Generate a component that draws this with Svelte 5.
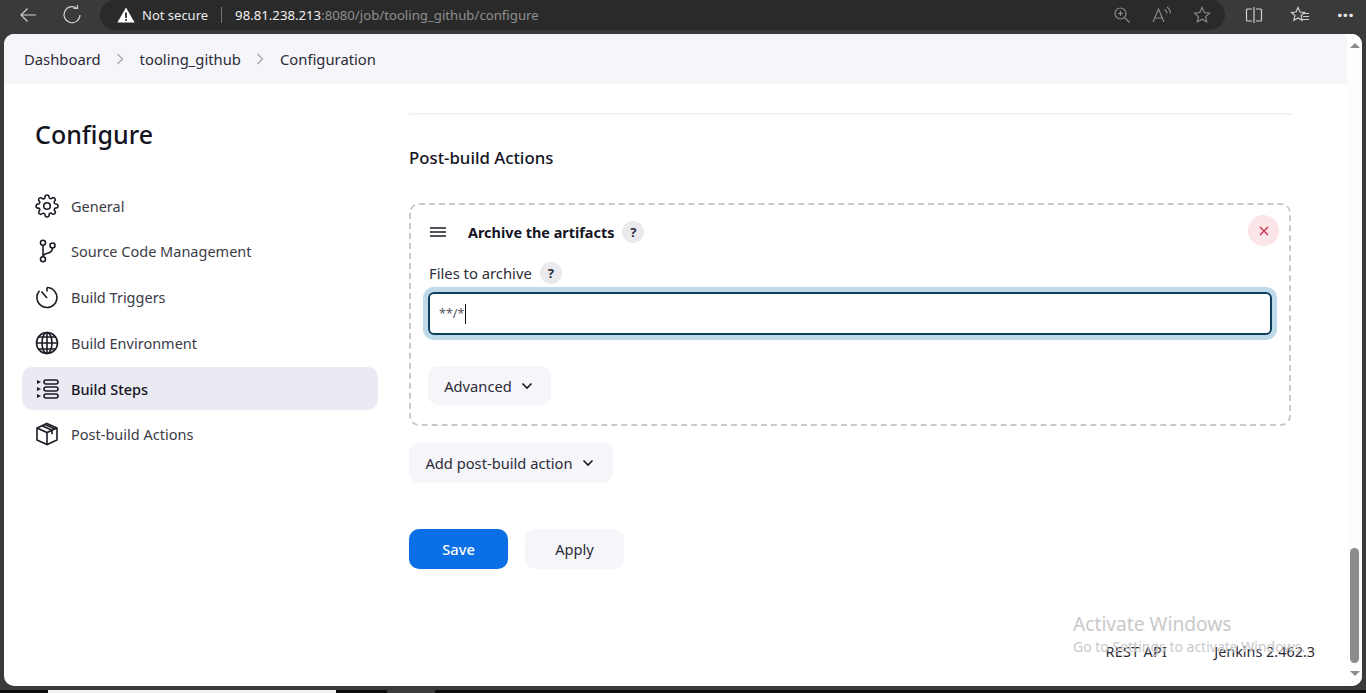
<script>
  const crumbs = ['Dashboard', 'tooling_github', 'Configuration'];
  const sections = [
    { id: 'general', label: 'General' },
    { id: 'scm', label: 'Source Code Management' },
    { id: 'triggers', label: 'Build Triggers' },
    { id: 'env', label: 'Build Environment' },
    { id: 'steps', label: 'Build Steps', active: true },
    { id: 'post', label: 'Post-build Actions' }
  ];
</script>

{#snippet chevron()}
  <svg class="chev" viewBox="0 0 12 8" width="12" height="8"><path d="M1.5 1.5 6 6l4.5-4.5" /></svg>
{/snippet}

<div class="window">
  <header class="chrome">
    <button class="nav-btn" aria-label="Back">
      <svg viewBox="0 0 20 20" width="20" height="20"><path d="M18 10H3M9.5 3.5 3 10l6.500 6.500" /></svg>
    </button>
    <button class="nav-btn reload" aria-label="Reload">
      <svg viewBox="0 0 20 20" width="20" height="20"><path d="M15 3.500 A8 8 0 1 0 18 10" /><path d="M11.500 3.500H15.500V0" /></svg>
    </button>
    <div class="address">
      <svg class="warn" viewBox="0 0 18 16" width="18" height="16"><path d="M9 .5 17.600 15.500H.4z" fill="#fff" /><rect x="8.100" y="5.500" width="1.800" height="5.500" fill="#2b2b2b" /><rect x="8.100" y="12" width="1.800" height="1.800" fill="#2b2b2b" /></svg>
      <span class="insecure">Not secure</span>
      <span class="sep"></span>
      <span class="url"><b>98.81.238.213</b>:8080/job/tooling_github/configure</span>
      <span class="addr-icons">
        <svg viewBox="0 0 18 18" width="18" height="18"><circle cx="7.500" cy="7.500" r="5.500" /><path d="M11.500 11.500 16.500 16.500M5 7.500h5M7.500 5v5" /></svg>
        <svg viewBox="0 0 20 18" width="20" height="18"><path d="M1 16 6.500 3 12 16M3 12h7M12.500 3.500a5 5 0 0 1 2.500 4M15 1a8 8 0 0 1 3.500 6.500" /></svg>
        <svg viewBox="0 0 18 18" width="18" height="18"><path d="M9 1.500 11.300 6.500l5.200.6-3.900 3.500 1.100 5.300L9 13.200l-4.700 2.700 1.100-5.300L1.500 7.100l5.200-.6z" /></svg>
      </span>
    </div>
    <div class="tools">
      <svg viewBox="0 0 18 18" width="18" height="18"><path d="M7 3H2.500a1 1 0 0 0-1 1v10a1 1 0 0 0 1 1H7M11 3h4.500a1 1 0 0 1 1 1v10a1 1 0 0 1-1 1H11M9 1v16" /></svg>
      <svg viewBox="0 0 20 18" width="20" height="18"><path d="M8 1.500 10 6l4.500.5-3.400 3 1 4.800L8 12l-4.100 2.300 1-4.800-3.400-3L6 6z" /><path d="M14 7.500h5M13 10.500h6M12.500 13.500h6.500" /></svg>
      <span class="dots">···</span>
    </div>
  </header>

  <div class="page">
    <div class="page-main">
      <nav class="breadcrumbs">
        {#each crumbs as crumb, i}
          {#if i > 0}
            <svg class="crumb-sep" viewBox="0 0 8 12" width="8" height="12"><path d="M1.500 1 6.500 6l-5 5" /></svg>
          {/if}
          <span>{crumb}</span>
        {/each}
      </nav>

      <div class="body">
        <aside class="sidebar">
          <h1>Configure</h1>
          <ul>
            {#each sections as s}
              <li class:active={s.active}>
                <svg class="side-icon" viewBox="0 0 24 24" width="24" height="24">
                  {#if s.id === 'general'}
                    <circle cx="12" cy="12" r="3.300" />
                    <path d="M19.400 15a1.650 1.650 0 0 0 .33 1.820l.06.06a2 2 0 0 1 0 2.830 2 2 0 0 1-2.830 0l-.06-.06a1.650 1.650 0 0 0-1.820-.33 1.650 1.650 0 0 0-1 1.510V21a2 2 0 0 1-2 2 2 2 0 0 1-2-2v-.09A1.650 1.650 0 0 0 9 19.400a1.650 1.650 0 0 0-1.820.33l-.06.06a2 2 0 0 1-2.830 0 2 2 0 0 1 0-2.830l.06-.06a1.650 1.650 0 0 0 .33-1.820 1.650 1.650 0 0 0-1.510-1H3a2 2 0 0 1-2-2 2 2 0 0 1 2-2h.09A1.650 1.650 0 0 0 4.600 9a1.650 1.650 0 0 0-.33-1.820l-.06-.06a2 2 0 0 1 0-2.830 2 2 0 0 1 2.830 0l.06.06a1.650 1.650 0 0 0 1.820.33H9a1.650 1.650 0 0 0 1-1.510V3a2 2 0 0 1 2-2 2 2 0 0 1 2 2v.09a1.650 1.650 0 0 0 1 1.510 1.650 1.650 0 0 0 1.820-.33l.06-.06a2 2 0 0 1 2.830 0 2 2 0 0 1 0 2.830l-.06.06a1.650 1.650 0 0 0-.33 1.820V9a1.650 1.650 0 0 0 1.510 1H21a2 2 0 0 1 2 2 2 2 0 0 1-2 2h-.09a1.650 1.650 0 0 0-1.510 1z" />
                  {:else if s.id === 'scm'}
                    <circle cx="8" cy="3.800" r="2.500" />
                    <circle cx="8" cy="20.200" r="2.500" />
                    <circle cx="17.500" cy="6.500" r="2.500" />
                    <path d="M8 6.300v11.400M17.500 9c0 3.500-2 4.500-5 5.300-2.500.7-4.500 1-4.500 3.400" />
                  {:else if s.id === 'triggers'}
                    <path d="M12 2.500a10 10 0 1 1-7.500 3.300" />
                    <path d="M12 2.500v4M12 13 6.500 6.500" />
                  {:else if s.id === 'env'}
                    <circle cx="12" cy="12" r="10.500" />
                    <ellipse cx="12" cy="12" rx="5" ry="10.500" />
                    <path d="M12 1.500v21M1.500 12h21M3.500 6h17M3.500 18h17" />
                  {:else if s.id === 'steps'}
                    <rect x="9" y="3" width="14" height="4" rx="2" />
                    <rect x="9" y="10" width="14" height="4" rx="2" />
                    <rect x="9" y="17" width="14" height="4" rx="2" />
                    <path class="solid" d="M2 3l4 2-4 2zM2 10l4 2-4 2zM2 17l4 2-4 2z" />
                  {:else}
                    <path d="M12 1.500 22 6v12l-10 4.500L2 18V6z" />
                    <path d="M2 6l10 4.500L22 6M12 10.500v12M7 3.800l10 4.500v4M10 2.500l10 4.500" />
                  {/if}
                </svg>
                <span>{s.label}</span>
              </li>
            {/each}
          </ul>
        </aside>

        <main class="content">
          <hr />
          <h2>Post-build Actions</h2>

          <section class="step">
            <div class="step-head">
              <svg class="handle" viewBox="0 0 16 10" width="16" height="10"><path d="M0 1h16M0 5h16M0 9h16" /></svg>
              <strong>Archive the artifacts</strong>
              <span class="help">?</span>
              <button class="remove" aria-label="Remove">
                <svg viewBox="0 0 10 10" width="10" height="10"><path d="M1 1l8 8M9 1 1 9" /></svg>
              </button>
            </div>
            <div class="field-label">
              <span>Files to archive</span>
              <span class="help">?</span>
            </div>
            <div class="input"><span>**/*</span><i class="caret"></i></div>
            <button class="btn advanced">Advanced {@render chevron()}</button>
          </section>

          <button class="btn add">Add post-build action {@render chevron()}</button>

          <div class="actions">
            <button class="btn save">Save</button>
            <button class="btn apply">Apply</button>
          </div>
        </main>
      </div>

      <footer>
        <span class="rest">REST API</span>
        <span>Jenkins 2.462.3</span>
      </footer>

      <div class="watermark">
        <div class="wm-title">Activate Windows</div>
        <div class="wm-sub">Go to Settings to activate Windows.</div>
      </div>
    </div>

    <div class="scrollbar">
      <span class="arrow up"></span>
      <span class="thumb"></span>
      <span class="arrow down"></span>
    </div>
  </div>

  <div class="taskbar">
    <span class="task-white"></span>
    <span class="task-grey"></span>
  </div>
</div>

<style>
  :global(body) {
    background: #000;
  }
  .window {
    width: 1366px;
    height: 693px;
    display: flex;
    flex-direction: column;
    background: #3a3a3a;
    font-family: "Noto Sans", "Open Sans", sans-serif;
    overflow: hidden;
  }
  button {
    font-family: inherit;
    border: none;
  }

  /* browser bar */
  .chrome {
    height: 34px;
    flex: none;
    display: flex;
    align-items: flex-start;
    padding-left: 18px;
    box-sizing: border-box;
  }
  .chrome svg {
    fill: none;
    stroke: #cfcfcf;
    stroke-width: 1.200;
  }
  .nav-btn {
    background: none;
    padding: 0;
    width: 20px;
    height: 20px;
    margin-top: 5px;
  }
  .nav-btn.reload {
    margin-left: 24px;
  }
  .address {
    margin-left: 18px;
    width: 1125px;
    height: 30px;
    background: #2a2a2a;
    border-radius: 15px;
    display: flex;
    align-items: center;
    padding: 0 14px 0 17px;
    box-sizing: border-box;
    color: #fff;
    font-size: 13px;
  }
  .chrome .warn {
    stroke: none;
  }
  .insecure {
    margin-left: 7px;
    color: #ececec;
    font-size: 13px;
  }
  .sep {
    width: 1px;
    height: 16px;
    background: #777;
    margin: 0 13px 0 13px;
  }
  .url {
    color: #8f8f8f;
    font-size: 13.200px;
  }
  .url b {
    color: #f0f0f0;
    font-weight: 400;
  }
  .addr-icons {
    margin-left: auto;
    display: flex;
    align-items: center;
    gap: 21px;
  }
  .addr-icons svg {
    stroke: #8a8a8a;
  }
  .tools {
    display: flex;
    align-items: center;
    height: 30px;
    margin-left: 20px;
    gap: 27px;
  }
  .dots {
    color: #e6e6e6;
    font-size: 20px;
    font-weight: 700;
    line-height: 1;
    letter-spacing: 0;
  }

  /* page */
  .page {
    flex: none;
    height: 652px;
    margin: 0 4px;
    display: flex;
    background: #fff;
    border-radius: 10px 10px 10px 10px;
    overflow: hidden;
    color: #14141f;
  }
  .page-main {
    flex: 1;
    position: relative;
    display: flex;
    flex-direction: column;
    min-width: 0;
  }
  .breadcrumbs {
    height: 50px;
    flex: none;
    background: #f5f5fa;
    display: flex;
    align-items: center;
    padding-left: 20px;
    font-size: 14.800px;
    color: #2c2c38;
  }
  .crumb-sep {
    margin: 0 15.500px;
    fill: none;
    stroke: #a8a8b0;
    stroke-width: 1.300;
  }
  .body {
    flex: 1;
    display: flex;
    min-height: 0;
  }

  /* sidebar */
  .sidebar {
    width: 405px;
    flex: none;
    padding: 0 0 0 18px;
    box-sizing: border-box;
  }
  .sidebar h1 {
    margin: 32px 0 32px 13px;
    height: 36px;
    font-size: 25px;
    line-height: 36px;
    font-weight: 500;
    color: #14141f;
  }
  .sidebar ul {
    list-style: none;
    margin: 0;
    padding: 0;
    width: 356px;
  }
  .sidebar li {
    height: 43px;
    margin-bottom: 2.800px;
    display: flex;
    align-items: center;
    padding-left: 13px;
    border-radius: 10px;
    font-size: 14.500px;
    color: #3b3b46;
  }
  .sidebar li.active {
    background: #eaeaf3;
    color: #14141f;
    font-weight: 500;
  }
  .side-icon {
    fill: none;
    stroke: #1c1c26;
    stroke-width: 1.600;
    margin-right: 12px;
    flex: none;
  }
  .side-icon .solid {
    fill: #1c1c26;
    stroke: none;
  }

  /* content */
  .content {
    width: 882px;
    flex: none;
  }
  hr {
    border: none;
    height: 2px;
    background: #f2f2f6;
    margin: 29px 0 0;
  }
  h2 {
    margin: 31px 0 0;
    height: 24px;
    line-height: 24px;
    font-size: 16.800px;
    font-weight: 500;
    color: #14141f;
  }
  .step {
    margin-top: 33px;
    height: 223px;
    box-sizing: border-box;
    border: 2px dashed #c5caca;
    border-radius: 10px;
    padding: 0 17px;
  }
  .step-head {
    height: 53px;
    display: flex;
    align-items: center;
    font-size: 14.400px;
  }
  .handle {
    fill: none;
    stroke: #1c1c26;
    stroke-width: 1.500;
    margin: 0 22px 0 2px;
  }
  .step-head strong {
    font-weight: 700;
    color: #14141f;
    padding-top: 2px;
  }
  .help {
    width: 22px;
    height: 22px;
    border-radius: 50%;
    background: #e9e9ee;
    margin-left: 8px;
    display: inline-flex;
    align-items: center;
    justify-content: center;
    font-size: 13px;
    font-weight: 700;
    color: #2c2c38;
  }
  .remove {
    margin-left: auto;
    margin-right: -7px;
    margin-bottom: 2px;
    width: 31px;
    height: 31px;
    border-radius: 50%;
    background: #fbe5e9;
    padding: 0;
    display: flex;
    align-items: center;
    justify-content: center;
  }
  .remove svg {
    fill: none;
    stroke: #c9304a;
    stroke-width: 1.400;
  }
  .field-label {
    height: 30px;
    margin-bottom: 4px;
    display: flex;
    align-items: center;
    padding-left: 1px;
    font-size: 14.800px;
    color: #2c2c38;
  }
  .input {
    height: 43px;
    box-sizing: border-box;
    border: 2px solid #0f3f5c;
    border-radius: 6px;
    box-shadow: 0 0 0 5px #bed9ea;
    display: flex;
    align-items: center;
    padding-left: 9px;
    margin-top: 3px;
    font-size: 12.500px;
    color: #55555f;
  }
  .caret {
    width: 1px;
    height: 20px;
    background: #111;
    margin-left: 1px;
  }
  .btn {
    display: inline-flex;
    align-items: center;
    justify-content: center;
    border-radius: 10px;
    background: #f5f5fa;
    color: #2c2c38;
    font-size: 14.700px;
    padding: 0;
  }
  .chev {
    fill: none;
    stroke: #1c1c26;
    stroke-width: 1.600;
    margin-left: 9px;
  }
  .advanced {
    margin-top: 31px;
    width: 123px;
    height: 39px;
    padding-right: 2px;
  }
  .add {
    margin-top: 17px;
    width: 204px;
    height: 40px;
    padding-right: 3px;
  }
  .actions {
    margin-top: 46px;
    display: flex;
    gap: 17px;
  }
  .actions .btn {
    width: 99px;
    height: 40px;
  }
  .btn.save {
    background: #0b6fe6;
    color: #fff;
    font-weight: 500;
  }

  /* footer */
  footer {
    height: 71px;
    flex: none;
    display: flex;
    justify-content: flex-end;
    align-items: flex-end;
    gap: 47px;
    padding: 0 32px 24px 0;
    box-sizing: border-box;
    font-size: 14.400px;
    line-height: 20px;
    color: #2c2c38;
  }
  .rest {
    letter-spacing: 0.3px;
  }
  .watermark {
    position: absolute;
    left: 1069px;
    top: 578px;
    color: #c9c9c9;
    white-space: nowrap;
    pointer-events: none;
  }
  .wm-title {
    font-size: 19.200px;
    line-height: 24px;
  }
  .wm-sub {
    font-size: 14px;
    line-height: 22px;
  }

  /* scrollbar */
  .scrollbar {
    width: 15px;
    flex: none;
    background: #fdfdfd;
    position: relative;
    display: flex;
    flex-direction: column;
    align-items: center;
  }
  .arrow {
    position: absolute;
    left: 3px;
    width: 0;
    height: 0;
    border-left: 5px solid transparent;
    border-right: 5px solid transparent;
  }
  .arrow.up {
    top: 9px;
    border-bottom: 5px solid #8c8c8c;
  }
  .arrow.down {
    bottom: 10px;
    border-top: 5px solid #8c8c8c;
  }
  .thumb {
    position: absolute;
    top: 514px;
    left: 3px;
    width: 9px;
    height: 115px;
    border-radius: 5px;
    background: #8c8c8c;
  }

  /* taskbar sliver */
  .taskbar {
    margin-top: 4px;
    flex: 1;
    background: #0c0c0c;
    display: flex;
    padding-left: 48px;
  }
  .task-white {
    width: 288px;
    background: #f3f3f3;
  }
  .task-grey {
    width: 48px;
    margin-left: 51px;
    background: #3c3c3c;
  }
</style>
